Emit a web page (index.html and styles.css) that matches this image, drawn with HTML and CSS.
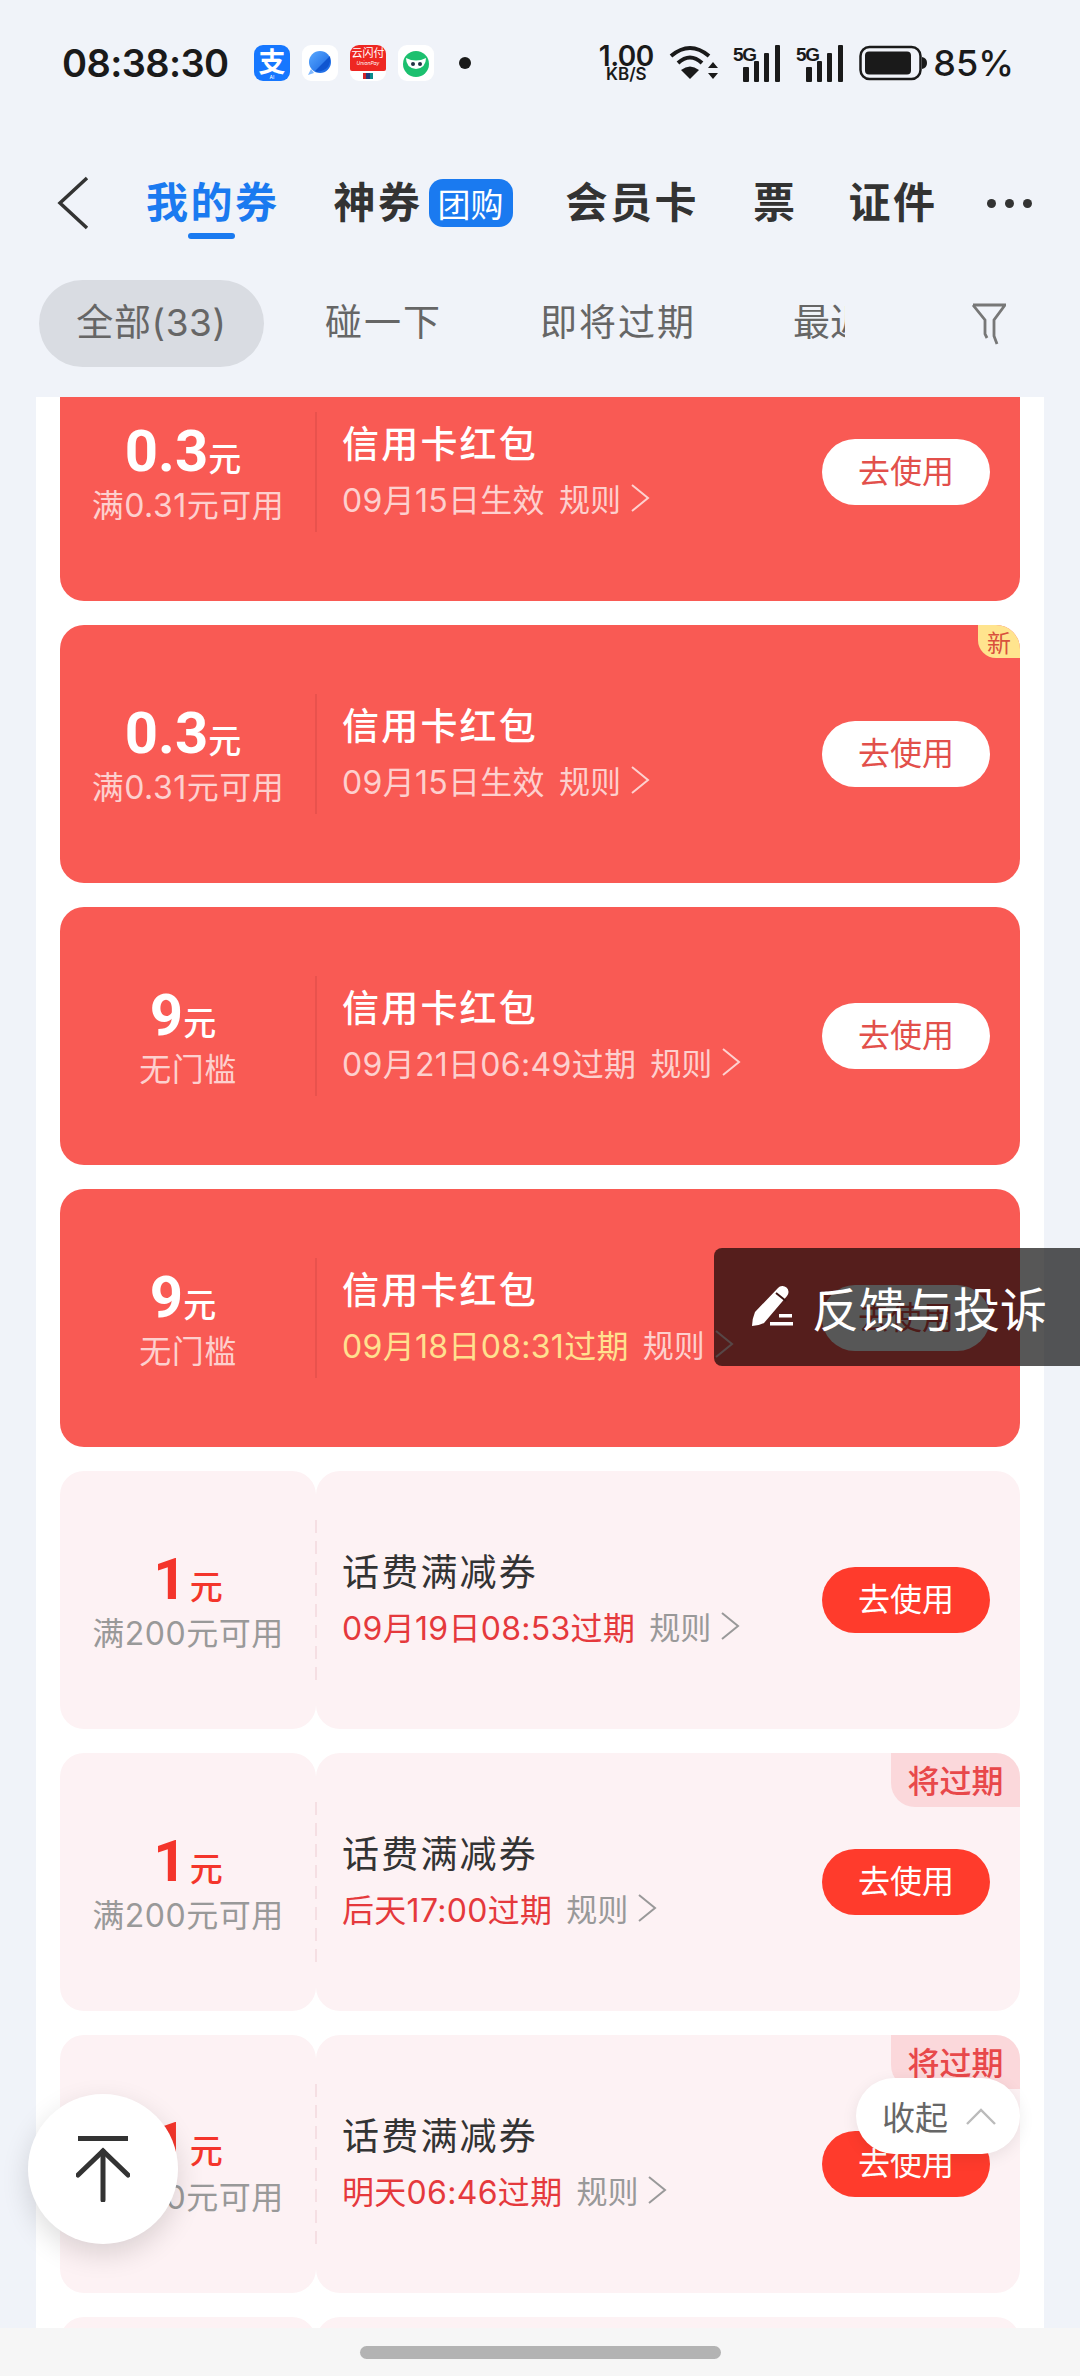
FILE: index.html
```html
<!DOCTYPE html>
<html lang="zh-CN">
<head>
<meta charset="utf-8">
<title>我的券</title>
<link rel="stylesheet" href="styles.css">
</head>
<body>
<div class="status">
  <span class="time">08:38:30</span>
  <div class="notifs">
    <span class="ni ni-ali">支<small>AI</small></span>
    <span class="ni ni-white">
      <svg width="34" height="34" viewBox="0 0 34 34"><defs><linearGradient id="pl" x1="0" y1="0" x2="1" y2="1"><stop offset="0" stop-color="#5aa9ff"/><stop offset="1" stop-color="#1260e0"/></linearGradient></defs><circle cx="17" cy="16" r="11" fill="url(#pl)"/><path d="M12 25 L27 10 Q29 24 14 26Z" fill="#0f55d0"/><path d="M5 29 L8 23 L11 27Z" fill="#7fb8ff"/></svg>
    </span>
    <span class="ni ni-up"><span class="ni-up-red"><b>云闪付</b><i>UnionPay</i></span><span class="ni-up-card"></span></span>
    <span class="ni ni-white">
      <svg width="34" height="34" viewBox="0 0 34 34"><circle cx="17" cy="18" r="13" fill="#1cc06f"/><path d="M7 12 Q17 17 27 12 Q27 22 17 23 Q7 22 7 12Z" fill="#fff"/><circle cx="14" cy="18" r="2" fill="#234"/><circle cx="21" cy="18" r="2" fill="#234"/></svg>
    </span>
    <span class="dot"></span>
  </div>
  <div class="sys">
    <span class="speed"><b>1.00</b><small>KB/S</small></span>
    <svg class="wifi" width="50" height="36" viewBox="0 0 50 36"><g fill="none" stroke="#1a1a1a" stroke-width="4"><path d="M2 11 Q21 -5 40 11"/><path d="M9 18 Q21 7 33 18"/></g><path d="M21 34 L12 25 Q21 18 30 25Z" fill="#1a1a1a"/><path d="M44 17 L49 23 H39Z M44 34 L49 28 H39Z" fill="#1a1a1a"/></svg>
    <svg class="sig" width="48" height="37" viewBox="0 0 48 37"><text x="0" y="16" class="fiveg">5G</text><g fill="#1a1a1a"><rect x="10" y="22" width="6" height="15" rx="1"/><rect x="21" y="16" width="5" height="21" rx="1"/><rect x="31" y="8" width="5" height="29" rx="1"/><rect x="42" y="0" width="5" height="37" rx="1"/></g></svg>
    <svg class="sig" width="48" height="37" viewBox="0 0 48 37"><text x="0" y="16" class="fiveg">5G</text><g fill="#1a1a1a"><rect x="10" y="22" width="6" height="15" rx="1"/><rect x="21" y="16" width="5" height="21" rx="1"/><rect x="31" y="8" width="5" height="29" rx="1"/><rect x="42" y="0" width="5" height="37" rx="1"/></g></svg>
    <svg class="batt" width="68" height="36" viewBox="0 0 68 36"><rect x="1.5" y="2" width="60" height="32" rx="9" fill="none" stroke="#1a1a1a" stroke-width="2.5"/><rect x="6" y="6.5" width="46" height="23" rx="4" fill="#1a1a1a"/><path d="M63 12 Q68 13 68 18 Q68 23 63 24Z" fill="#1a1a1a"/></svg>
    <span class="pct">85%</span>
  </div>
</div>

<nav class="tabs">
  <svg class="back" width="32" height="54" viewBox="0 0 32 54"><path d="M30 2 L3 27 L30 52" fill="none" stroke="#333" stroke-width="3.5"/></svg>
  <span class="tab tab-on">我的券</span>
  <span class="tab tab-shen">神券</span>
  <span class="tuan">团购</span>
  <span class="tab tab-hui">会员卡</span>
  <span class="tab tab-piao">票</span>
  <span class="tab tab-zheng">证件</span>
  <span class="more"><i></i><i></i><i></i></span>
</nav>

<div class="filters">
  <span class="chip chip-on">全部(33)</span>
  <span class="chip chip-peng">碰一下</span>
  <span class="chip chip-ji">即将过期</span>
  <span class="chip chip-zui"><span>最近</span></span>
  <svg class="funnel" width="34" height="42" viewBox="0 0 34 42"><path d="M1 2 H33 L22 17 V33 L25 41" fill="none" stroke="#777" stroke-width="2.8"/><path d="M1 2 L13 17 V31 L15 35" fill="none" stroke="#777" stroke-width="2.8"/></svg>
</div>

<main class="panel">
  <div class="list">
    <article class="card red">
      <div class="stub"><div class="amt">0.3<em>元</em></div><div class="cond">满0.31元可用</div></div>
      <div class="body"><span class="sep"></span>
        <div class="info"><div class="name">信用卡红包</div><div class="meta"><span class="date">09月15日生效</span><span class="rule">规则</span><svg class="chev" width="20" height="30" viewBox="0 0 20 30"><path d="M2 2 L18 15 L2 28" fill="none" stroke="currentColor" stroke-width="2"/></svg></div></div>
        <span class="use">去使用</span></div>
    </article>
    <article class="card red">
      <span class="tag-new">新</span>
      <div class="stub"><div class="amt">0.3<em>元</em></div><div class="cond">满0.31元可用</div></div>
      <div class="body"><span class="sep"></span>
        <div class="info"><div class="name">信用卡红包</div><div class="meta"><span class="date">09月15日生效</span><span class="rule">规则</span><svg class="chev" width="20" height="30" viewBox="0 0 20 30"><path d="M2 2 L18 15 L2 28" fill="none" stroke="currentColor" stroke-width="2"/></svg></div></div>
        <span class="use">去使用</span></div>
    </article>
    <article class="card red">
      <div class="stub"><div class="amt">9<em>元</em></div><div class="cond">无门槛</div></div>
      <div class="body"><span class="sep"></span>
        <div class="info"><div class="name">信用卡红包</div><div class="meta"><span class="date">09月21日06:49过期</span><span class="rule">规则</span><svg class="chev" width="20" height="30" viewBox="0 0 20 30"><path d="M2 2 L18 15 L2 28" fill="none" stroke="currentColor" stroke-width="2"/></svg></div></div>
        <span class="use">去使用</span></div>
    </article>
    <article class="card red">
      <div class="stub"><div class="amt">9<em>元</em></div><div class="cond">无门槛</div></div>
      <div class="body"><span class="sep"></span>
        <div class="info"><div class="name">信用卡红包</div><div class="meta"><span class="date date-warn">09月18日08:31过期</span><span class="rule">规则</span><svg class="chev" width="20" height="30" viewBox="0 0 20 30"><path d="M2 2 L18 15 L2 28" fill="none" stroke="currentColor" stroke-width="2"/></svg></div></div>
        <span class="use">去使用</span></div>
    </article>
    <article class="card soft">
      <div class="stub"><div class="amt">1<em>元</em></div><div class="cond">满200元可用</div></div>
      <div class="body"><span class="sep"></span>
        <div class="info"><div class="name">话费满减券</div><div class="meta"><span class="date">09月19日08:53过期</span><span class="rule">规则</span><svg class="chev" width="20" height="30" viewBox="0 0 20 30"><path d="M2 2 L18 15 L2 28" fill="none" stroke="currentColor" stroke-width="2"/></svg></div></div>
        <span class="use">去使用</span></div>
    </article>
    <article class="card soft">
      <span class="tag-exp">将过期</span>
      <div class="stub"><div class="amt">1<em>元</em></div><div class="cond">满200元可用</div></div>
      <div class="body"><span class="sep"></span>
        <div class="info"><div class="name">话费满减券</div><div class="meta"><span class="date">后天17:00过期</span><span class="rule">规则</span><svg class="chev" width="20" height="30" viewBox="0 0 20 30"><path d="M2 2 L18 15 L2 28" fill="none" stroke="currentColor" stroke-width="2"/></svg></div></div>
        <span class="use">去使用</span></div>
    </article>
    <article class="card soft">
      <span class="tag-exp">将过期</span>
      <div class="stub"><div class="amt">1<em>元</em></div><div class="cond">满200元可用</div></div>
      <div class="body"><span class="sep"></span>
        <div class="info"><div class="name">话费满减券</div><div class="meta"><span class="date">明天06:46过期</span><span class="rule">规则</span><svg class="chev" width="20" height="30" viewBox="0 0 20 30"><path d="M2 2 L18 15 L2 28" fill="none" stroke="currentColor" stroke-width="2"/></svg></div></div>
        <span class="use">去使用</span></div>
    </article>
    <article class="card soft">
      <div class="stub"></div>
      <div class="body"></div>
    </article>
  </div>
</main>

<footer class="nav"><span class="pill"></span></footer>

<aside class="toast">
  <svg width="44" height="42" viewBox="0 0 44 42"><path d="M28 3 a6 6 0 0 1 9 8 L14 38 Q8 41 2 41 Q2 34 5 27Z" fill="#fff"/><path d="M26 8 L36 16" stroke="#3b1512" stroke-width="2"/><rect x="29" y="29" width="13" height="3.5" fill="#fff"/><rect x="20" y="37" width="23" height="3.5" fill="#fff"/></svg>
  <span>反馈与投诉</span>
</aside>
<button class="totop"><svg width="54" height="66" viewBox="0 0 54 66"><g fill="none" stroke="#333" stroke-width="5" stroke-linecap="round"><path d="M2 2.5 H52" stroke-linecap="butt"/><path d="M2 39 L27 15 L52 39"/><path d="M27 15 V64"/></g></svg></button>
<div class="fold"><span>收起</span><svg width="30" height="18" viewBox="0 0 30 18"><path d="M1 17 L15 3 L29 17" fill="none" stroke="#bbb" stroke-width="2.4"/></svg></div>
</body>
</html>
```
FILE: styles.css
```css
* { box-sizing: border-box; }
html, body { margin: 0; padding: 0; }
body {
  position: relative;
  width: 1080px;
  height: 2376px;
  overflow: hidden;
  display: flex;
  flex-direction: column;
  background: #f0f3f9;
  font-family: Inter, "Noto Sans CJK SC", sans-serif;
  color: #333;
}

/* status bar */
.status { height: 130px; flex: none; display: flex; align-items: center; padding: 0 66px 4px 62px; }
.time { font: 600 38px/1 Inter, sans-serif; color: #1a1a1a; width: 192px; letter-spacing: -.6px; }
.notifs { display: flex; align-items: center; gap: 12px; }
.ni { width: 36px; height: 36px; border-radius: 9px; display: flex; align-items: center; justify-content: center; position: relative; }
.ni-ali { background: #1677ff; color: #fff; font: 700 27px/30px "Noto Sans CJK SC", sans-serif; padding-bottom: 5px; }
.ni-ali small { position: absolute; bottom: 0; left: 0; right: 0; text-align: center; font: 400 5px/7px Inter, sans-serif; }
.ni-white { background: #fff; }
.ni-up { background: #fff; flex-direction: column; justify-content: flex-start; }
.ni-up-red { width: 36px; height: 26px; background: #ee2722; border-radius: 9px 9px 2px 2px; color: #fff; display: flex; flex-direction: column; align-items: center; }
.ni-up-red b { font: 400 11px/15px "Noto Sans CJK SC", sans-serif; }
.ni-up-red i { font: italic 400 5px/6px Inter, sans-serif; }
.ni-up-card { width: 10px; height: 6px; margin-top: 2px; background: #233c7c; border-left: 3px solid #d3232a; border-right: 3px solid #0a8a8a; }
.dot { width: 12px; height: 12px; border-radius: 50%; background: #1a1a1a; margin-left: 13px; }
.sys { margin-left: auto; display: flex; align-items: center; color: #1a1a1a; }
.speed { width: 56px; display: flex; flex-direction: column; align-items: center; margin-right: 15px; }
.speed b { font: 600 28px/22px Inter, sans-serif; letter-spacing: -.5px; }
.speed small { font: 600 17px/14px Inter, sans-serif; }
.wifi { margin-right: 14px; }
.sig { margin-right: 15px; }
.fiveg { font: 700 19px "Liberation Sans", sans-serif; fill: #1a1a1a; letter-spacing: -1.2px; }
.batt { margin-right: 6px; }
.pct { font: 500 36px/1 Inter, sans-serif; }

/* tabs */
.tabs { height: 150px; flex: none; display: flex; align-items: center; padding: 0 0 4px 57px; position: relative; }
.back { flex: none; }
.tab { font-size: 42px; font-weight: 700; height: 56px; line-height: 50px; letter-spacing: 2.5px; white-space: nowrap; font-family: "Noto Sans CJK SC", sans-serif; }
.tab-on { color: #1a7af0; margin-left: 57px; position: relative; }
.tab-on::after { content: ""; position: absolute; left: 42px; bottom: -8px; width: 47px; height: 6px; border-radius: 3px; background: #1a7af0; }
.tab-shen { margin-left: 54px; }
.tuan { margin-left: 6px; width: 84px; height: 48px; border-radius: 14px; background: #1a7af0; color: #fff; font-size: 33px; line-height: 48px; text-align: center; font-family: "Noto Sans CJK SC", sans-serif; }
.tab-hui { margin-left: 53px; }
.tab-piao { margin-left: 54px; }
.tab-zheng { margin-left: 51px; }
.more { margin-left: 49px; display: flex; gap: 9px; }
.more i { width: 9px; height: 9px; border-radius: 50%; background: #333; }

/* filters */
.filters { height: 87px; flex: none; margin-bottom: 30px; display: flex; align-items: center; padding-left: 39px; position: relative; }
.chip { font-size: 37px; line-height: 86px; height: 87px; color: #666; white-space: nowrap; }
.chip-on { width: 225px; border-radius: 44px; background: #d9dce2; text-align: center; letter-spacing: .6px; }
.chip-peng { margin-left: 61px; letter-spacing: 2px; }
.chip-ji { margin-left: 98px; letter-spacing: 2px; }
.chip-zui { margin-left: 97px; width: 52px; overflow: hidden; }
.funnel { margin-left: 127px; flex: none; }

/* list */
.panel { flex: 1; min-height: 0; margin: 0 36px; padding: 0 24px; background: #fff; overflow: hidden; }
.list { margin-top: -54px; display: flex; flex-direction: column; gap: 24px; }
.card { height: 258px; flex: none; display: flex; position: relative; }
.stub { width: 256px; flex: none; display: flex; flex-direction: column; align-items: center; justify-content: center; padding: 10px 0 2px; }
.body { flex: 1; display: flex; align-items: center; }
.sep { flex: none; width: 2px; margin-right: 25px; margin-left: -1px; }
.info { flex: 1; display: flex; flex-direction: column; padding-bottom: 4px; }
.amt { font-family: Roboto, "Noto Sans CJK SC", sans-serif; font-size: 58px; font-weight: 700; line-height: 60px; }
.amt em { font-style: normal; font-size: 33px; font-weight: 500; margin-left: 0; }
.cond { font-size: 32px; line-height: 44px; margin-top: -6px; margin-bottom: 4px; letter-spacing: .5px; white-space: nowrap; }
.name { font-family: "Noto Sans CJK SC", sans-serif; font-size: 37px; font-weight: 500; line-height: 52px; letter-spacing: 2.2px; margin-top: -5px; margin-bottom: 5px; }
.meta { display: flex; align-items: center; height: 44px; margin-top: 3px; font-size: 31px; }
.date { white-space: nowrap; font-size: 32px; letter-spacing: .3px; }
.rule { margin-left: 14px; }
.chev { margin-left: 9px; }
.use { flex: none; width: 168px; height: 66px; margin-right: 30px; border-radius: 33px; text-align: center; font-size: 32px; line-height: 60px; font-family: "Noto Sans CJK SC", sans-serif; }

.red { background: #f95a54; border-radius: 24px; color: #fff; }
.red .amt { padding-right: 10px; }
.red .sep { height: 120px; background: #e9524d; }
.red .cond, .red .date, .red .meta { color: rgba(255, 255, 255, .72); }
.red .date-warn { color: #ffe08f; }
.red .use { background: #fff; color: #e2504b; }

.soft .stub, .soft .body { background: #fdf2f4; border-radius: 24px; }
.soft .sep { height: 160px; background: repeating-linear-gradient(#f5dfe3 0 13px, transparent 13px 21px); }
.soft .amt { color: #f4352b; }
.soft .amt em { margin-left: 3px; }
.soft .cond { color: #999; }
.soft .name { color: #333; font-weight: 400; }
.soft .meta { color: #999; }
.soft .date { color: #e5393c; }
.soft .use { background: #ff3b2c; color: #fff; }

.tag-new { position: absolute; top: 0; right: 0; width: 42px; height: 33px; background: #ffe48e; border-radius: 0 24px 0 18px; color: #d9503d; font-size: 24px; line-height: 33px; text-align: center; font-family: "Noto Sans CJK SC", sans-serif; }
.tag-exp { position: absolute; top: 0; right: 0; width: 129px; height: 54px; background: #fbd8db; border-radius: 0 24px 0 24px; color: #e8484a; font-size: 32px; font-weight: 500; line-height: 52px; text-align: center; font-family: "Noto Sans CJK SC", sans-serif; }

/* bottom bar */
.nav { height: 48px; flex: none; background: #f6f6f6; display: flex; align-items: center; justify-content: center; }
.pill { width: 361px; height: 13px; border-radius: 7px; background: #b3b3b3; }

/* overlays */
.toast { position: absolute; left: 714px; top: 1248px; width: 366px; height: 118px; padding: 0 0 2px 36px; background: rgba(0, 0, 0, .66); border-radius: 8px 0 0 8px; color: #fff; display: flex; align-items: center; gap: 18px; font-size: 47px; white-space: nowrap; font-family: "Noto Sans CJK SC", sans-serif; }
.totop { position: absolute; left: 28px; top: 2094px; width: 150px; height: 150px; padding: 0; border: 0; border-radius: 50%; background: #fff; box-shadow: 0 10px 28px rgba(0, 0, 0, .14); display: flex; align-items: center; justify-content: center; }
.fold { position: absolute; left: 856px; top: 2078px; width: 164px; height: 76px; border-radius: 38px; background: #fff; box-shadow: 0 4px 16px rgba(0, 0, 0, .08); display: flex; align-items: center; padding-left: 26px; gap: 18px; font-size: 33px; color: #666; font-family: "Noto Sans CJK SC", sans-serif; }
```
